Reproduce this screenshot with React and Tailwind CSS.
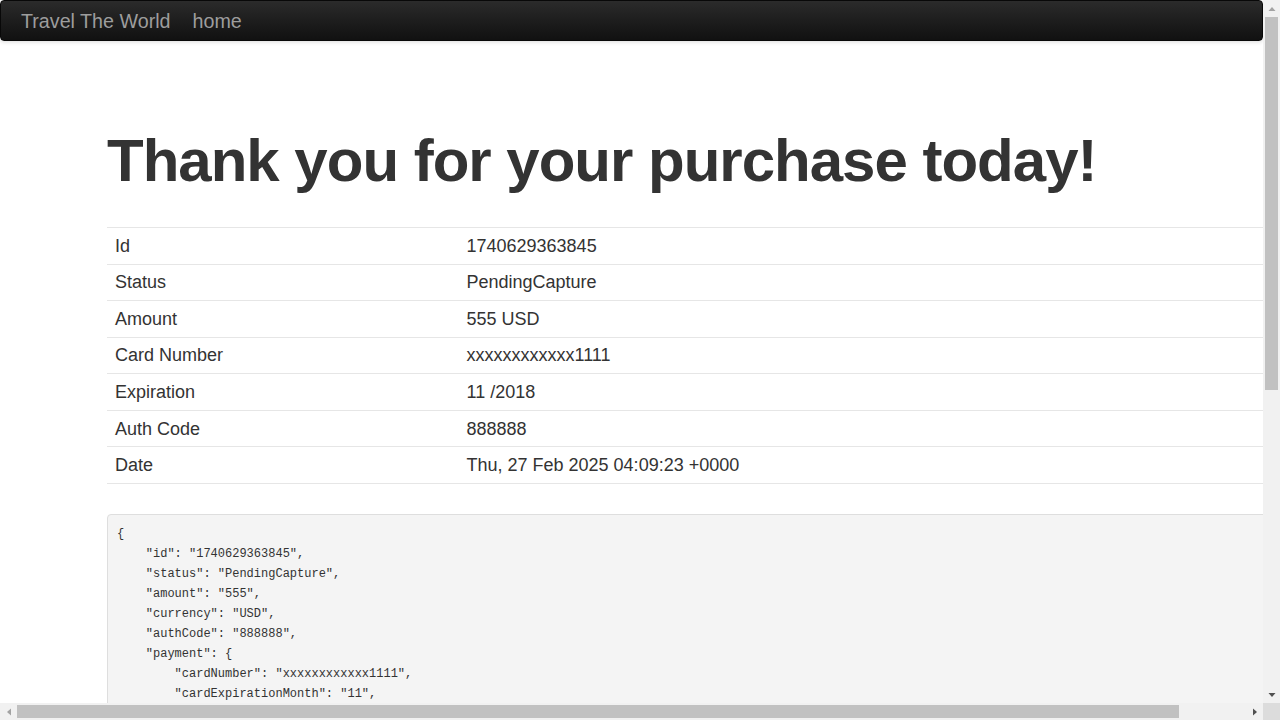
const rows = [
  ['Id', '1740629363845'],
  ['Status', 'PendingCapture'],
  ['Amount', '555 USD'],
  ['Card Number', 'xxxxxxxxxxxx1111'],
  ['Expiration', '11 /2018'],
  ['Auth Code', '888888'],
  ['Date', 'Thu, 27 Feb 2025 04:09:23 +0000'],
]

const json = `{
    "id": "1740629363845",
    "status": "PendingCapture",
    "amount": "555",
    "currency": "USD",
    "authCode": "888888",
    "payment": {
        "cardNumber": "xxxxxxxxxxxx1111",
        "cardExpirationMonth": "11",
        "cardExpirationYear": "2018"
    },
    "dateTime": "Thu, 27 Feb 2025 04:09:23 +0000"
}`

function Arrow({ dir, dark }) {
  const paths = {
    up: 'M0.5 6 L4 2 L7.5 6 Z',
    down: 'M0.5 2 L4 6 L7.5 2 Z',
    left: 'M6 0.5 L2 4 L6 7.5 Z',
    right: 'M2 0.5 L6 4 L2 7.5 Z',
  }
  return (
    <svg width="8" height="8" viewBox="0 0 8 8">
      <path d={paths[dir]} fill={dark ? '#505050' : '#a3a3a3'} />
    </svg>
  )
}

export default function App() {
  return (
    <div className="w-[1280px] h-[720px] overflow-hidden flex flex-col bg-white font-['Liberation_Sans',Arial,sans-serif] text-[#333]">
      <div className="flex flex-1 min-h-0">
        {/* page */}
        <div className="flex-1 min-w-0 overflow-hidden">
          <nav className="h-[41px] w-full rounded-[4px] border border-[#080808] bg-linear-to-b from-[#2b2b2b] to-[#111] shadow-[0_1px_4px_rgba(0,0,0,0.15)] flex items-center pl-[20px] pt-[2px] gap-[22px] text-[19.7px] text-[#9d9d9d]">
            <span>Travel The World</span>
            <span>home</span>
          </nav>

          <div className="pl-[107px] w-[1500px]">
            <h1 className="mt-[90px] mb-[36px] text-[60px] leading-[60px] font-bold tracking-[-1px]">
              Thank you for your purchase today!
            </h1>

            <div className="text-[18px] border-b border-[#e6e6e6]">
              {rows.map(([label, value]) => (
                <div key={label} className="h-[36.57px] border-t border-[#e6e6e6] flex items-center pt-[1px]">
                  <div className="w-[351.5px] pl-[8px]">{label}</div>
                  <div className="pl-[8px]">{value}</div>
                </div>
              ))}
            </div>

            <pre className="mt-[30px] border border-[#dedede] rounded-[4px] bg-[#f4f4f4] pt-[9px] px-[9px] pb-[9px] font-['Liberation_Mono',monospace] text-[12px] leading-[20px] text-[#333] whitespace-pre">
              {json}
            </pre>
          </div>
        </div>

        {/* vertical scrollbar */}
        <div className="w-[17px] bg-[#f1f1f1] flex flex-col items-center">
          <div className="h-[17px] flex items-center justify-center">
            <Arrow dir="up" />
          </div>
          <div className="w-[13px] h-[373px] bg-[#c1c1c1]" />
          <div className="flex-1" />
          <div className="h-[17px] flex items-center justify-center">
            <Arrow dir="down" dark />
          </div>
        </div>
      </div>

      {/* horizontal scrollbar */}
      <div className="h-[17px] flex">
        <div className="flex-1 bg-[#f1f1f1] flex items-center">
          <div className="w-[17px] flex items-center justify-center">
            <Arrow dir="left" />
          </div>
          <div className="w-[1162px] h-[13px] bg-[#c1c1c1]" />
          <div className="flex-1" />
          <div className="w-[17px] flex items-center justify-center">
            <Arrow dir="right" dark />
          </div>
        </div>
        <div className="w-[17px] bg-[#dcdcdc]" />
      </div>
    </div>
  )
}
